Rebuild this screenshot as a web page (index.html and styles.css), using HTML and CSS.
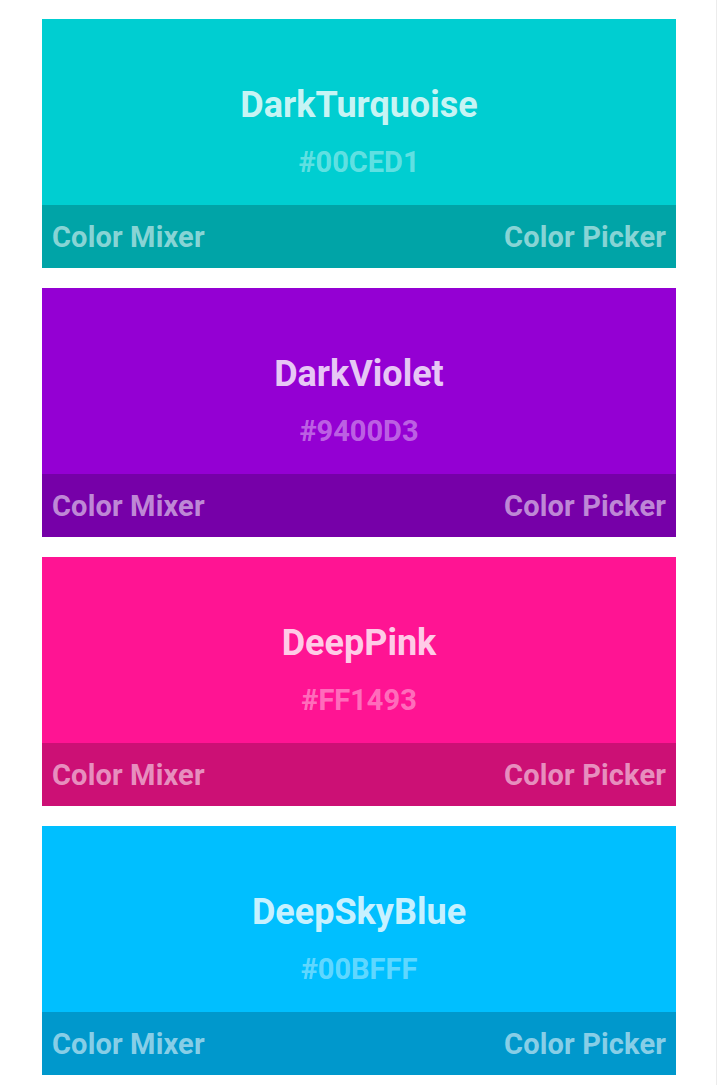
FILE: index.html
```html
<!DOCTYPE html>
<html>
<head>
<meta charset="utf-8">
<link rel="stylesheet" href="styles.css">
</head>
<body>
<div class="list">
  <div class="card turquoise">
    <div class="swatch">
      <div class="name">DarkTurquoise</div>
      <div class="hex">#00CED1</div>
    </div>
    <div class="actions"><span>Color Mixer</span><span>Color Picker</span></div>
  </div>
  <div class="card violet">
    <div class="swatch">
      <div class="name">DarkViolet</div>
      <div class="hex">#9400D3</div>
    </div>
    <div class="actions"><span>Color Mixer</span><span>Color Picker</span></div>
  </div>
  <div class="card pink">
    <div class="swatch">
      <div class="name">DeepPink</div>
      <div class="hex">#FF1493</div>
    </div>
    <div class="actions"><span>Color Mixer</span><span>Color Picker</span></div>
  </div>
  <div class="card sky">
    <div class="swatch">
      <div class="name">DeepSkyBlue</div>
      <div class="hex">#00BFFF</div>
    </div>
    <div class="actions"><span>Color Mixer</span><span>Color Picker</span></div>
  </div>
</div>
<div class="scrollbar"></div>
</body>
</html>
```
FILE: styles.css
```css
html, body {
  margin: 0;
  padding: 0;
  background: #ffffff;
  font-family: Roboto, "Noto Sans", sans-serif;
}
.list {
  display: flex;
  flex-direction: column;
  gap: 20px;
  padding: 19px 43px 0 42px;
}
.card {
  display: flex;
  flex-direction: column;
  height: 249px;
}
.swatch {
  height: 186px;
  display: flex;
  flex-direction: column;
  align-items: center;
  padding-top: 65px;
  box-sizing: border-box;
}
.name {
  font-size: 36px;
  font-weight: 700;
  color: rgba(255, 255, 255, 0.8);
  line-height: 42px;
}
.hex {
  font-size: 29px;
  font-weight: 700;
  color: rgba(255, 255, 255, 0.4);
  line-height: 34px;
  margin-top: 19px;
}
.actions {
  flex: 1;
  display: flex;
  justify-content: space-between;
  align-items: center;
  padding: 0 10px;
  background: rgba(0, 0, 0, 0.2);
  font-size: 29px;
  font-weight: 700;
  letter-spacing: 0.15px;
  color: rgba(255, 255, 255, 0.55);
}
.turquoise { background: #00CED1; }
.violet { background: #9400D3; }
.pink { background: #FF1493; }
.sky { background: #00BFFF; }
.scrollbar {
  position: fixed;
  top: 0;
  right: 2px;
  width: 1px;
  height: 100%;
  background: #ececec;
}
```
